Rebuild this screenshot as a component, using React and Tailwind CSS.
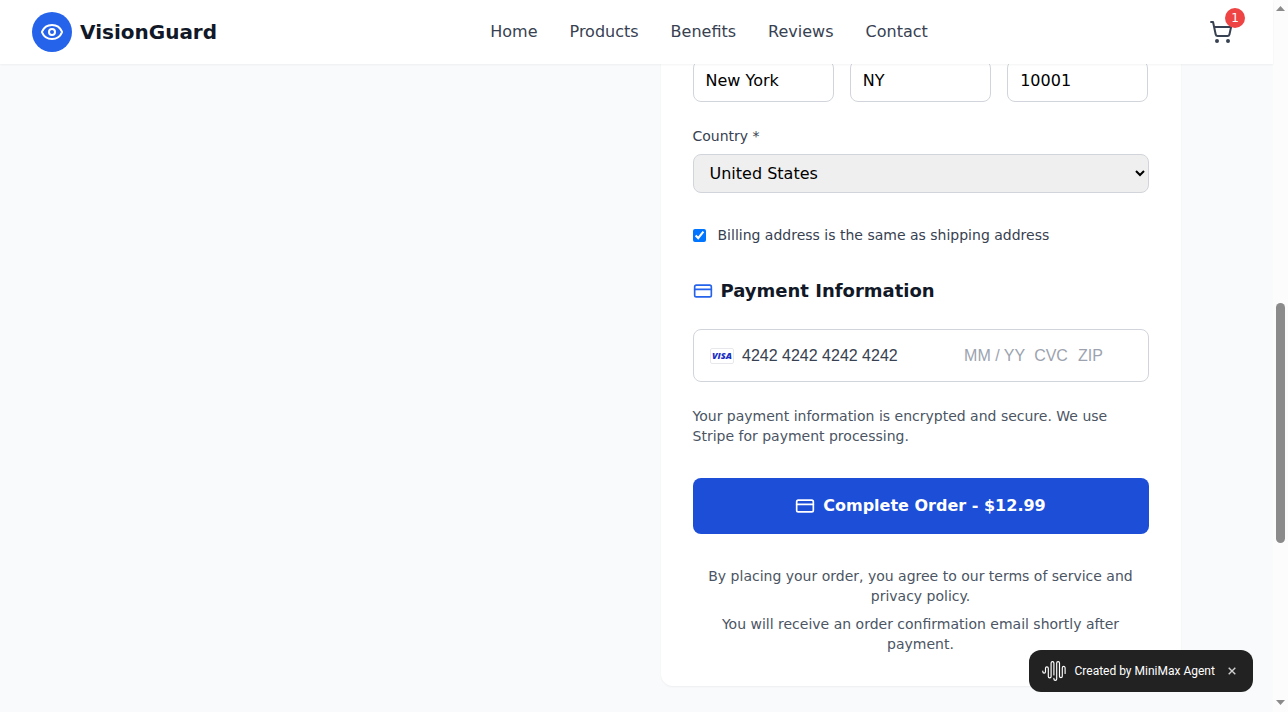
import { CreditCard, Eye, ShoppingCart } from "lucide-react";

const links = ["Home", "Products", "Benefits", "Reviews", "Contact"];
const region = ["New York", "NY", "10001"];

function Header() {
  return (
    <header className="relative z-10 flex h-16 w-full shrink-0 items-center justify-between bg-white px-8 shadow-xs">
      <div className="flex items-center gap-2">
        <div className="flex h-10 w-10 items-center justify-center rounded-full bg-[#2563eb]">
          <Eye className="h-6 w-6 text-white" />
        </div>
        <span className="text-xl font-bold text-[#111827]">VisionGuard</span>
      </div>
      <nav className="flex gap-8 text-base text-[#374151]">
        {links.map((l) => (
          <a key={l}>{l}</a>
        ))}
      </nav>
      <button className="relative p-2 text-[#374151]">
        <ShoppingCart className="h-6 w-6" />
        <span className="absolute -right-1 -top-1 flex h-5 w-5 items-center justify-center rounded-full bg-[#ef4444] text-xs text-white">
          1
        </span>
      </button>
    </header>
  );
}

function CardField() {
  return (
    <div className="mt-6 flex h-[53px] items-center rounded-lg border border-[#d1d5db] px-4 font-['Liberation_Sans',sans-serif] text-base">
      <svg width="24" height="16" viewBox="0 0 24 16" className="shrink-0">
        <rect x="0.5" y="0.5" width="23" height="15" rx="1.5" fill="#fff" stroke="#e6e8ec" />
        <text
          x="12"
          y="11.4"
          textAnchor="middle"
          textLength="20"
          lengthAdjust="spacingAndGlyphs"
          fontFamily="Open Sans, sans-serif"
          fontWeight="800"
          fontStyle="italic"
          fontSize="9.4"
          fill="#1a2ec4"
        >
          VISA
        </text>
      </svg>
      <span className="ml-[8.5px] text-[#374151]">4242 4242 4242 4242</span>
      <span className="ml-auto text-[#9ca3af]">MM / YY</span>
      <span className="ml-[9px] text-[#9ca3af]">CVC</span>
      <span className="ml-2.5 mr-[28.7px] text-[#9ca3af]">ZIP</span>
    </div>
  );
}

function Checkout() {
  return (
    <main className="mx-auto -mt-[68px] grid w-full max-w-6xl grid-cols-2 gap-12 px-8">
      <div />
      <section className="h-[690px] rounded-xl bg-white px-8 pt-16 shadow-xs">
        <div className="grid grid-cols-3 gap-4">
          {region.map((v) => (
            <input
              key={v}
              defaultValue={v}
              className="h-[42px] w-full min-w-0 rounded-lg border border-[#d1d5db] px-3 pb-[9px] pt-[7px] text-black"
            />
          ))}
        </div>
        <label className="mb-2 mt-6 block text-sm text-[#374151]">Country *</label>
        <select className="block h-[39px] w-full rounded-lg border border-[#d1d5db] bg-[#efefef] px-3 py-2 text-black">
          <option>United States</option>
        </select>
        <label className="mt-8 flex items-center text-sm text-[#374151]">
          <input type="checkbox" defaultChecked className="mr-3 h-[13px] w-[13px]" />
          Billing address is the same as shipping address
        </label>
        <h2 className="mt-8 flex items-center text-lg font-semibold text-[#111827]">
          <CreditCard className="mr-2 h-5 w-5 text-[#2563eb]" />
          Payment Information
        </h2>
        <CardField />
        <p className="mt-6 text-sm text-[#4b5563]">
          Your payment information is encrypted and secure. We use Stripe for payment processing.
        </p>
        <button className="mt-8 flex h-14 w-full items-center justify-center gap-2 rounded-lg bg-[#1d4ed8] font-semibold text-white">
          <CreditCard className="h-5 w-5" />
          Complete Order - $12.99
        </button>
        <div className="mt-8 text-center text-sm text-[#4b5563]">
          <p>By placing your order, you agree to our terms of service and privacy policy.</p>
          <p className="mt-2">You will receive an order confirmation email shortly after payment.</p>
        </div>
      </section>
    </main>
  );
}

function AgentBadge() {
  return (
    <div className="absolute left-[1029px] top-[650px] z-20 flex h-[42px] w-[224px] items-center rounded-xl bg-[#222222] pl-[13px] font-['Roboto',sans-serif] text-xs text-white">
      <svg
        width="25"
        height="22"
        viewBox="0 0 25 22"
        fill="none"
        stroke="#fff"
        strokeWidth="1.15"
        strokeLinecap="round"
        className="shrink-0"
      >
        <path d="M.8 11v.8a1.35 1.35 0 0 0 2.7 0V8.2a1.4 1.4 0 0 1 2.8 0v8.2a1.4 1.4 0 0 0 2.8 0V3a1.4 1.4 0 0 1 2.8 0v12" />
        <path d="M11.9 18.2v.8a1.4 1.4 0 0 0 2.8 0V3a1.4 1.4 0 0 1 2.8 0v13.2a1.4 1.4 0 0 0 2.8 0V7.8a1.4 1.4 0 0 1 2.8 0v5.7" />
      </svg>
      <span className="ml-[7.5px] whitespace-nowrap">Created by MiniMax Agent</span>
      <svg width="8" height="8" viewBox="0 0 8 8" stroke="#d0d0d0" strokeWidth="1.4" className="ml-[13.5px] shrink-0">
        <path d="M.7.7l6.6 6.6M7.3.7L.7 7.3" />
      </svg>
    </div>
  );
}

function Scrollbar() {
  return (
    <div className="flex h-full w-[15px] shrink-0 flex-col items-center bg-[#fcfcfc]">
      <svg width="15" height="15" viewBox="0 0 15 15" fill="#8b8b8b">
        <path d="M3 11L7.5 6L12 11z" />
      </svg>
      <div className="mt-72 h-60 w-[9px] rounded-full bg-[#8b8b8b]" />
      <svg width="15" height="15" viewBox="0 0 15 15" fill="#8b8b8b" className="mt-auto">
        <path d="M3 3L12 3L7.5 8z" />
      </svg>
    </div>
  );
}

export default function App() {
  return (
    <div className="relative flex h-[712px] w-[1288px] overflow-hidden bg-[#f9fafb] font-['DejaVu_Sans',sans-serif]">
      <div className="flex w-[1273px] flex-col">
        <Header />
        <div className="flow-root min-h-0 flex-1 overflow-hidden">
          <Checkout />
        </div>
      </div>
      <Scrollbar />
      <AgentBadge />
    </div>
  );
}
